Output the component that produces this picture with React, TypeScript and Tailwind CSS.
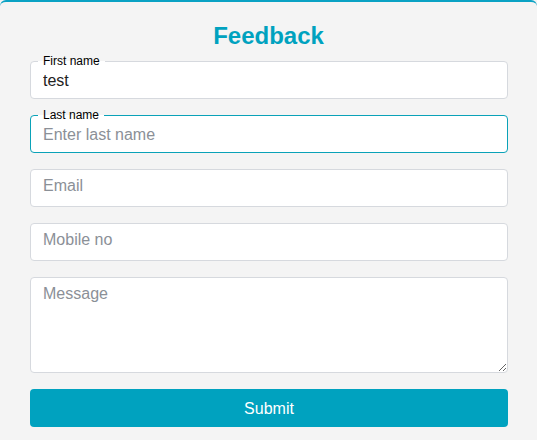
import React from "react";

const font = { fontFamily: '"Liberation Sans", Arial, sans-serif' };

function Field({ label, placeholder, value, focused }: { label?: string; placeholder: string; value?: string; focused?: boolean }) {
  return (
    <div
      className={`relative h-[38px] w-full rounded-[4px] border bg-white ${focused ? "border-[#0aa2b8]" : "border-[#d6d9de]"}`}
    >
      {label && (
        <span className="absolute left-[7px] top-[-8px] bg-[linear-gradient(to_bottom,#f4f4f4_50%,#ffffff_50%)] px-[5px] text-[12px] leading-[14px] text-black">
          {label}
        </span>
      )}
      <input
        className={`h-full w-full rounded-[4px] bg-transparent px-[12px] text-[16px] text-[#222] outline-none placeholder:text-[#8b9097] ${label ? "pt-[2px]" : "pb-[4px]"}`}
        style={font}
        placeholder={placeholder}
        defaultValue={value}
      />
    </div>
  );
}

export default function App() {
  return (
    <div className="h-[440px] w-[537px] overflow-hidden bg-[#f4f4f4]" style={font}>
      <div className="h-full rounded-t-[6px] border-t-2 border-[#0aa2c4] pt-[18px]">
        <h1 className="text-center text-[24px] font-bold leading-[32px] text-[#00a2bf]">Feedback</h1>
        <div className="ml-[30px] mt-[9px] flex w-[478px] flex-col gap-[16px]">
          <Field label="First name" placeholder="Enter first name" value="test" />
          <Field label="Last name" placeholder="Enter last name" focused />
          <Field placeholder="Email" />
          <Field placeholder="Mobile no" />
          <textarea
            className="block h-[96px] w-full rounded-[4px] border border-[#d6d9de] bg-white px-[12px] pt-[6px] text-[16px] leading-[20px] text-[#222] outline-none placeholder:text-[#8b9097]"
            style={font}
            placeholder="Message"
          />
          <button
            className="h-[38px] w-full rounded-[4px] bg-[#00a2bf] pt-[2px] text-[16px] text-white"
            style={font}
          >
            Submit
          </button>
        </div>
      </div>
    </div>
  );
}
